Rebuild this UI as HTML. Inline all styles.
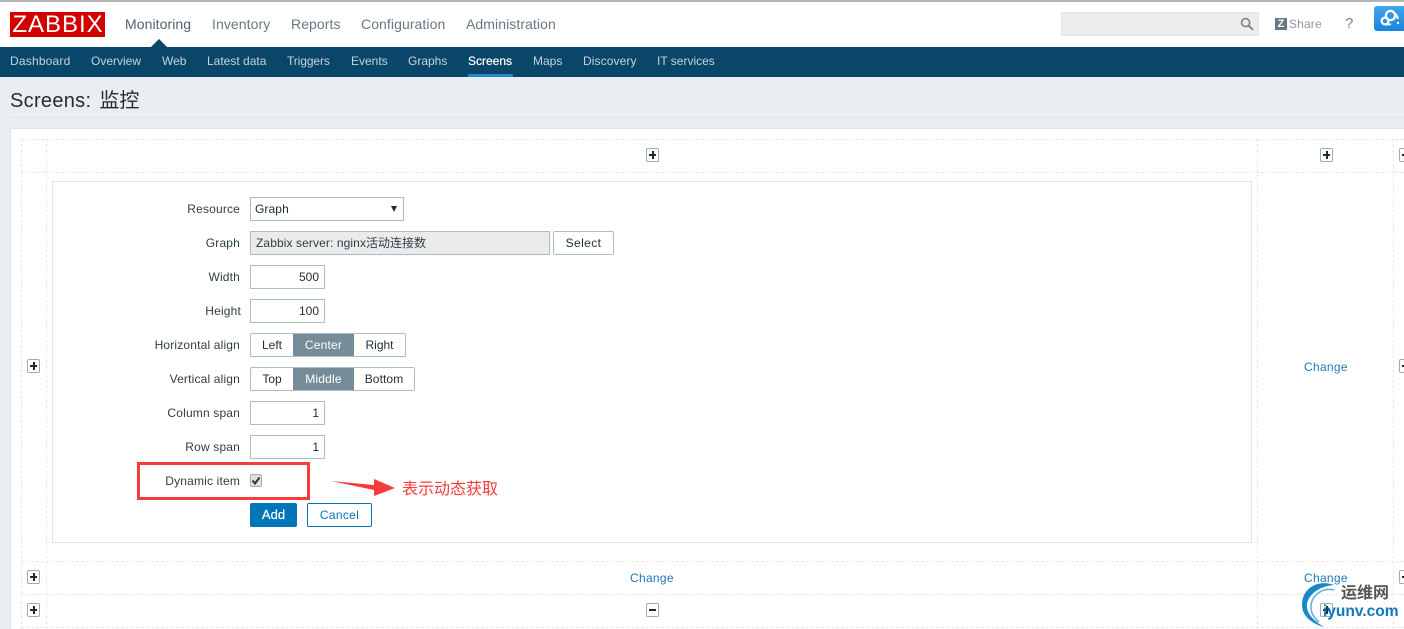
<!DOCTYPE html>
<html><head><meta charset="utf-8"><style>
*{box-sizing:border-box}
html,body{margin:0;padding:0;width:1404px;height:629px;overflow:hidden;background:#ebeef0;font-family:"Liberation Sans","Noto Sans CJK SC",sans-serif;font-size:12px;color:#1f2c33}
.a{position:absolute;white-space:nowrap}
.n{top:16px;font-size:14px;line-height:17px;color:#687883;letter-spacing:.08px}
.s{top:54px;font-size:12px;line-height:15px;color:#c5d3dc}
.l{width:200px;text-align:right;font-size:12px;line-height:14px;color:#2f3d45;letter-spacing:.17px}
.i{border:1px solid #acbbc4;background:#fff;height:24px;line-height:22px;padding:0 5px;font-size:12px;color:#1f2c33}
.r{text-align:right}
.sg{display:flex;height:24px;border:1px solid #acbbc4;border-radius:2px;background:#fff;line-height:22px;text-align:center;color:#1f2c33}
.sg b{font-weight:normal;display:block}
.sg .on{background:#768d99;color:#fff}
.dh{height:0;border-top:1px dashed #e6e9eb}
.dv{width:0;border-left:1px dashed #e6e9eb}
.p{width:13px;height:14px;border:1px solid #9aacb6;border-radius:2px;background:#fff}
.p:before{content:"";position:absolute;left:2px;top:5px;width:7px;height:2px;background:#1f2c33}
.p.pl:after{content:"";position:absolute;left:5px;top:2px;width:2px;height:8px;background:#1f2c33}
.c{color:#1f77b8;font-size:12px;line-height:14px;letter-spacing:.3px}
</style></head><body>
<div class="a" style="left:0;top:0;width:1404px;height:47px;background:#fff"></div>
<div class="a" style="left:0;top:0;width:1404px;height:2px;background:#b4b4b4"></div>
<div class="a" style="left:10px;top:12px;width:95px;height:25px;background:#d40000;color:#fff;font-size:24px;line-height:26px;text-align:center;letter-spacing:1px;padding-left:1px">ZABBIX</div>
<div class="a n" style="left:125px;color:#52646f">Monitoring</div>
<div class="a n" style="left:212px">Inventory</div>
<div class="a n" style="left:291px">Reports</div>
<div class="a n" style="left:361px">Configuration</div>
<div class="a n" style="left:466px">Administration</div>
<div class="a" style="left:151px;top:39px;width:0;height:0;border-left:8px solid transparent;border-right:8px solid transparent;border-bottom:8px solid #0a466a"></div>

<div class="a" style="left:1061px;top:12px;width:198px;height:24px;background:#ededed;border:1px solid #e3e5e6"></div>
<svg class="a" style="left:1240px;top:17px" width="14" height="14" viewBox="0 0 14 14"><circle cx="5.6" cy="5.6" r="4" fill="none" stroke="#76858e" stroke-width="1.6"/><path d="M8.6 8.6L13 12.8" stroke="#76858e" stroke-width="2"/></svg>
<div class="a" style="left:1275px;top:18px;width:12px;height:12px;background:#687883;color:#fff;font-size:11px;font-weight:bold;line-height:12px;text-align:center">Z</div>
<div class="a" style="left:1289px;top:16px;font-size:12px;line-height:16px;color:#8b98a0;letter-spacing:.15px">Share</div>
<div class="a" style="left:1345px;top:15px;font-size:15px;line-height:18px;color:#76858e">?</div>
<div class="a" style="left:1374px;top:6px;width:30px;height:25px;background:linear-gradient(#41a5ee,#1a84dc);border-radius:3px 0 0 3px"></div>
<svg class="a" style="left:1378px;top:8px" width="26" height="20" viewBox="0 0 26 20"><circle cx="7" cy="13" r="3.4" fill="none" stroke="#fff" stroke-width="2.2"/><circle cx="12.5" cy="7.5" r="4.6" fill="none" stroke="#fff" stroke-width="2.2"/><path d="M16.5 5.5C18.5 6.5 19.5 8.5 19.8 11" fill="none" stroke="#fff" stroke-width="2"/><path d="M7 16.4H13" stroke="#fff" stroke-width="2"/><circle cx="20" cy="15" r="1.2" fill="#fff"/></svg>

<div class="a" style="left:0;top:47px;width:1404px;height:30px;background:#0a466a"></div>
<div class="a s" style="left:10px;letter-spacing:.2px">Dashboard</div>
<div class="a s" style="left:91px">Overview</div>
<div class="a s" style="left:162px">Web</div>
<div class="a s" style="left:207px">Latest data</div>
<div class="a s" style="left:287px;letter-spacing:-.1px">Triggers</div>
<div class="a s" style="left:351px">Events</div>
<div class="a s" style="left:408px">Graphs</div>
<div class="a s" style="left:468px;color:#fff;-webkit-text-stroke:.2px #fff">Screens</div>
<div class="a" style="left:468px;top:74px;width:45px;height:3px;background:#1f8ac9"></div>
<div class="a s" style="left:533px">Maps</div>
<div class="a s" style="left:583px;letter-spacing:.1px">Discovery</div>
<div class="a s" style="left:657px">IT services</div>

<div class="a" style="left:10px;top:89px;font-size:20px;line-height:24px;color:#1f2c33;letter-spacing:.3px">Screens:<span style="margin-left:8px;letter-spacing:0">监控</span></div>
<div class="a" style="left:10px;top:117px;width:1394px;height:1px;background:#dfe4e7"></div>
<div class="a" style="left:10px;top:128px;width:1394px;height:501px;background:#fff;border:1px solid #dfe4e7;border-right:0;border-bottom:0"></div>

<div class="a dh" style="left:21px;top:139px;width:1383px"></div>
<div class="a dh" style="left:21px;top:172px;width:1383px"></div>
<div class="a dh" style="left:21px;top:561px;width:1383px"></div>
<div class="a dh" style="left:21px;top:594px;width:1383px"></div>
<div class="a dh" style="left:21px;top:627px;width:1383px"></div>
<div class="a dv" style="left:21px;top:139px;height:490px"></div>
<div class="a dv" style="left:46px;top:139px;height:490px"></div>
<div class="a dv" style="left:1257px;top:139px;height:490px"></div>
<div class="a dv" style="left:1393px;top:139px;height:490px"></div>

<div class="a p pl" style="left:646px;top:148px"></div>
<div class="a p pl" style="left:1320px;top:148px"></div>
<div class="a p" style="left:1399px;top:148px"></div>
<div class="a p pl" style="left:27px;top:359px"></div>
<div class="a c" style="left:1304px;top:360px">Change</div>
<div class="a p" style="left:1399px;top:359px"></div>
<div class="a p pl" style="left:27px;top:570px"></div>
<div class="a c" style="left:630px;top:571px">Change</div>
<div class="a c" style="left:1304px;top:571px">Change</div>
<div class="a p" style="left:1399px;top:570px"></div>
<div class="a p pl" style="left:27px;top:603px"></div>
<div class="a p" style="left:646px;top:603px"></div>
<div class="a p pl" style="left:1320px;top:603px"></div>

<div class="a" style="left:52px;top:181px;width:1200px;height:362px;border:1px solid #dfe4e7;background:#fff"></div>

<div class="a l" style="left:40px;top:202px">Resource</div>
<div class="a i" style="left:250px;top:197px;width:154px;padding-left:4px;letter-spacing:.1px">Graph</div>
<div class="a" style="left:391px;top:206px;width:0;height:0;border-left:3.5px solid transparent;border-right:3.5px solid transparent;border-top:6px solid #1f2c33"></div>

<div class="a l" style="left:40px;top:236px">Graph</div>
<div class="a i" style="left:250px;top:231px;width:300px;background:#ebebeb;padding-left:5px;color:#2f3d45"><span style="letter-spacing:.1px">Zabbix server: nginx</span>活动连接数</div>
<div class="a i" style="left:553px;top:231px;width:61px;text-align:center;border-radius:2px;padding:0;letter-spacing:.4px">Select</div>

<div class="a l" style="left:40px;top:270px">Width</div>
<div class="a i r" style="left:250px;top:265px;width:75px">500</div>
<div class="a l" style="left:41px;top:304px">Height</div>
<div class="a i r" style="left:250px;top:299px;width:75px">100</div>

<div class="a l" style="left:40px;top:338px">Horizontal align</div>
<div class="a sg" style="left:250px;top:333px;width:156px"><b style="width:42px">Left</b><b class="on" style="width:61px;letter-spacing:.2px">Center</b><b style="width:51px">Right</b></div>

<div class="a l" style="left:40px;top:372px">Vertical align</div>
<div class="a sg" style="left:250px;top:367px;width:165px"><b style="width:42px">Top</b><b class="on" style="width:61px;letter-spacing:.2px">Middle</b><b style="width:60px;letter-spacing:.1px">Bottom</b></div>

<div class="a l" style="left:40px;top:406px">Column span</div>
<div class="a i r" style="left:250px;top:401px;width:75px">1</div>
<div class="a l" style="left:40px;top:440px">Row span</div>
<div class="a i r" style="left:250px;top:435px;width:75px">1</div>

<div class="a l" style="left:40px;top:474px">Dynamic item</div>
<div class="a" style="left:250px;top:474px;width:12px;height:13px;background:#e0e0e0;border:1px solid #acacac;border-radius:2px"></div>
<svg class="a" style="left:250px;top:474px" width="12" height="13" viewBox="0 0 12 13"><path d="M2.5 6.5L5 9.5L9.5 3.5" fill="none" stroke="#333" stroke-width="2"/></svg>

<div class="a" style="left:137px;top:462px;width:173px;height:38px;border:3px solid #f53b3b"></div>
<svg class="a" style="left:330px;top:479px" width="66" height="20" viewBox="0 0 66 20"><path d="M1 2L44 6L44 0L65 9L44 17L44 11Z" fill="#f53b3b"/></svg>
<div class="a" style="left:402px;top:480px;font-size:16px;line-height:20px;color:#f53b3b">表示动态获取</div>

<div class="a" style="left:250px;top:503px;width:47px;height:24px;background:#0275b8;border-radius:2px;color:#fff;font-size:13px;line-height:24px;text-align:center;-webkit-text-stroke:.2px #fff">Add</div>
<div class="a" style="left:307px;top:503px;width:65px;height:24px;background:#fff;border:1px solid #0275b8;border-radius:2px;color:#0275b8;font-size:12px;line-height:22px;text-align:center;letter-spacing:.3px">Cancel</div>

<svg class="a" style="left:1298px;top:580px" width="50" height="49" viewBox="0 0 50 49"><path d="M36 5C20-1 4 8 4 25C4 35 12 43 26 47C15 40 8 33 9 24C11 13 23 6 36 5Z" fill="#1b87c9"/><path d="M36 10C24 7 13 16 13 27C13 33 16 38 21 42" fill="none" stroke="#5fb0df" stroke-width="1.5"/></svg>
<div class="a" style="left:1341px;top:584px;font-size:16px;line-height:20px;font-weight:bold;color:#555">运维网</div>
<div class="a" style="left:1323px;top:603px;font-size:15.5px;line-height:18px;font-weight:bold;color:#0f77c4">iyunv.com</div>
</body></html>
